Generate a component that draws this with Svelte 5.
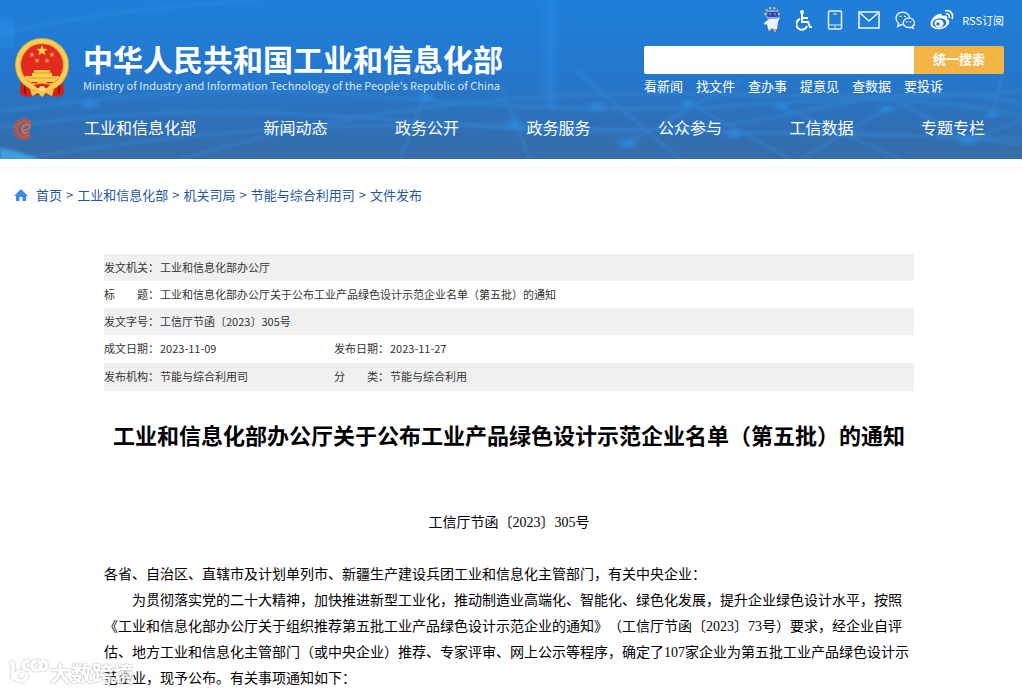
<script>
	const nav = ['工业和信息化部', '新闻动态', '政务公开', '政务服务', '公众参与', '工信数据', '专题专栏'];
	const quickLinks = ['看新闻', '找文件', '查办事', '提意见', '查数据', '要投诉'];
	const crumbs = ['首页', '工业和信息化部', '机关司局', '节能与综合利用司', '文件发布'];

	const info = [
		[['发文机关：', '工业和信息化部办公厅']],
		[['标　　题：', '工业和信息化部办公厅关于公布工业产品绿色设计示范企业名单（第五批）的通知']],
		[['发文字号：', '工信厅节函〔2023〕305号']],
		[['成文日期：', '2023-11-09'], ['发布日期：', '2023-11-27']],
		[['发布机构：', '节能与综合利用司'], ['分　　类：', '节能与综合利用']]
	];

	// glowing nodes of the header backdrop: x, y, radius
	const nodes = [
		[597, 107, 12],
		[628, 143, 14],
		[688, 103, 10],
		[734, 134, 12],
		[782, 107, 10],
		[887, 109, 10],
		[968, 140, 14],
		[992, 115, 10],
		[425, 97, 12],
		[515, 124, 14],
		[90, 104, 12]
	];

	// outer teeth of the small gear logo
	const teeth = [60, 82, 104, 126, 148, 170, 192, 214, 236, 258, 280, 302];

	let keyword = $state('');
</script>

<header>
	<svg class="backdrop" viewBox="0 0 1022 159" preserveAspectRatio="none" aria-hidden="true">
		<defs>
			<radialGradient id="glow">
				<stop offset="0" stop-color="#2b95ec" stop-opacity=".65" />
				<stop offset="1" stop-color="#2b90e6" stop-opacity="0" />
			</radialGradient>
			<linearGradient id="beam">
				<stop offset="0" stop-color="#2b93f0" stop-opacity="0" />
				<stop offset=".5" stop-color="#2b93f0" stop-opacity=".35" />
				<stop offset="1" stop-color="#2b93f0" stop-opacity="0" />
			</linearGradient>
			<filter id="soft"><feGaussianBlur stdDeviation="1.500" /></filter>
		</defs>
		<g fill="none" stroke="#3494e4" stroke-width="3" opacity=".35" filter="url(#soft)">
			<path d="M0 112 Q200 80 400 98 T760 104 T1022 116" />
			<path d="M0 128 Q180 100 420 122 T800 112 T1022 104" />
			<path d="M20 159 Q260 118 520 126 T1022 138" />
			<path d="M180 159 Q420 88 700 94 T1022 90" />
			<path d="M734 134 Q860 128 1022 144" />
			<path d="M425 97 L400 159 M500 85 L530 159 M575 70 L680 159 M688 103 L790 159" />
			<path d="M860 80 L968 140 L1022 120 M782 107 L900 159 M0 34 Q100 10 260 0" />
			<path d="M628 143 L740 80 M887 109 L800 159 M992 115 L1004 70" />
		</g>
		<rect x="540" y="0" width="20" height="110" fill="url(#beam)" />
		<rect x="0" y="18" width="14" height="30" fill="#2e94ee" opacity=".35" filter="url(#soft)" />
		<path d="M0 148 Q24 152 44 162 L0 162Z" fill="#42b4f8" opacity=".7" filter="url(#soft)" />
		{#each nodes as [x, y, r]}
			<ellipse cx={x} cy={y} rx={r} ry={r * 0.6} fill="url(#glow)" />
		{/each}
	</svg>

	<div class="top">
		<a class="brand" href="#home">
			<svg class="emblem" viewBox="0 0 56 60" aria-hidden="true">
				<path d="M7 41 L6 56 Q14 61 20 57 L36 57 Q44 61 50 56 L49 41Z" fill="#d51f1c" />
				<path d="M11 45v11M45 45v11" stroke="#8f1414" stroke-width="2" />
				<circle cx="28" cy="27" r="27" fill="#e4ad37" />
				<circle cx="28" cy="27" r="24" fill="none" stroke="#f6cd58" stroke-width="4" />
				<circle cx="28" cy="27" r="21" fill="#e32a20" />
				<path d="M28 7l1.500 3.700 4 .2-3.100 2.500 1.100 3.900-3.500-2.200-3.500 2.200 1.100-3.900-3.100-2.500 4-.2z" fill="#fbcf4a" />
				<g fill="#f3a640">
					<path id="small-star" d="M18 14l.8 1.700 1.900.1-1.500 1.200.5 1.900-1.700-1-1.700 1 .5-1.900-1.500-1.200 1.900-.1z" />
					<use href="#small-star" x="20" />
					<use href="#small-star" x="5" y="6" />
					<use href="#small-star" x="15" y="6" />
				</g>
				<path d="M20 32h16v3h2v3h7v2l-5 4H16l-5-4v-2h7v-3h2z" fill="#fccf4c" />
				<path d="M19 35h18M14 40h28" stroke="#e29828" />
				<path d="M15 44 Q22 47 24 44 Q28 41 32 44 Q34 47 41 44 L36 49 Q28 46 20 49Z" fill="#f8c545" />
				<path d="M20 47Q28 44 36 47L33 50H23Z" fill="#d9251f" />
				<path d="M16 51 Q23 55 28 50 Q33 55 40 51 L38 58 L32 55 L28 59 L24 55 L18 58Z" fill="#f7c84c" />
				<circle cx="28" cy="51" r="3" fill="#ffe07a" />
			</svg>
			<span class="names">
				<span class="name-cn">中华人民共和国工业和信息化部</span>
				<span class="name-en">Ministry of Industry and Information Technology of the People's Republic of China</span>
			</span>
		</a>

		<div class="tools">
			<div class="icons">
				<a href="#robot" aria-label="智能问答">
					<svg width="18" height="26" viewBox="0 0 18 26">
						<path d="M2 8Q3 1 9 1t7 7" fill="none" stroke="#d9cf55" stroke-width="2" stroke-dasharray="2 2" />
						<rect x="3" y="3" width="12" height="10" rx="5" fill="#8da9ed" />
						<rect x="4" y="5" width="11" height="5" rx="2" fill="#3341a8" />
						<path d="M6 7h2M11 7h2" stroke="#7fd4ff" />
						<path d="M6 12h7l4-2-2 5-1 7-3 2-1-3-3 2-2-1-1-5-2 1-1-2z" fill="#eef1fb" />
						<path d="M6 22v2M12 22v3" stroke="#e6a23c" stroke-width="2" />
					</svg>
				</a>
				<a href="#accessibility" aria-label="无障碍">
					<svg width="16" height="22" viewBox="0 0 16 22" fill="none" stroke="#fff" stroke-width="2">
						<circle cx="6" cy="3" r="2" fill="#fff" stroke="none" />
						<path d="M6 5v8h6l2 5h2M6 9h6M4 10a5.500 5.500 0 1 0 7 7" />
					</svg>
				</a>
				<a href="#mobile" aria-label="手机版">
					<svg width="16" height="20" viewBox="0 0 16 20" fill="none" stroke="#e6f3ff">
						<rect x="1.500" y="1" width="13" height="18" rx="1" stroke-width="1.500" />
						<path d="M6 4h4M2 15h12M7 17h2" />
					</svg>
				</a>
				<a href="#mail" aria-label="邮箱">
					<svg width="22" height="18" viewBox="0 0 22 18" fill="none" stroke="#e6f3ff" stroke-width="1.600">
						<rect x="1" y="1" width="20" height="16" />
						<path d="M2 2l9 8 9-8" />
					</svg>
				</a>
				<a href="#wechat" aria-label="微信">
					<svg width="20" height="20" viewBox="0 0 22 20" fill="none" stroke="#e6f3ff" stroke-width="1.500">
						<path d="M10 15l-3 0-4 2 1-3C-1 9 1 2 8 1.500c5-.2 8 3 8 6" />
						<path d="M15 8c7 0 8 7 4 9l1 2-3-1c-5 1-8-2-8-5s3-5 6-5z" />
						<path d="M5 6h2M10 6h2M12 12h2M16 12h2" />
					</svg>
				</a>
				<a href="#weibo" aria-label="微博">
					<svg width="24" height="22" viewBox="0 0 24 22">
						<path d="M9 5c3-1 3 1 3 2 3-1 6-1 5 3 3 1 3 4 1 6-4 5-13 6-17 1C-1 13 4 6 9 5z" fill="#fff" />
						<ellipse cx="9.500" cy="14" rx="7" ry="4.800" fill="#2379ce" transform="rotate(-8 9.500 14)" />
						<ellipse cx="9" cy="14.500" rx="4.500" ry="4" fill="#fff" />
						<circle cx="8" cy="15" r="1.800" fill="#2379ce" />
						<path d="M15 2c5-2 9 3 7 8M16 5c3-1 4 2 3 4" fill="none" stroke="#fff" stroke-width="1.600" />
					</svg>
				</a>
				<a class="rss" href="#rss">RSS订阅</a>
			</div>
			<form class="search" onsubmit={(e) => e.preventDefault()}>
				<input type="text" aria-label="搜索" bind:value={keyword} />
				<button type="submit">统一搜索</button>
			</form>
			<div class="quick">
				{#each quickLinks as link}
					<a href="#quick">{link}</a>
				{/each}
			</div>
		</div>
	</div>

	<nav>
		<a class="party" href="#party" aria-label="工业和信息化部">
			<svg width="26" height="24" viewBox="0 0 26 24" fill="none">
				{#each teeth as angle}
					<rect x="20" y="11" width="3" height="2" fill="#d8522e" transform="rotate({angle} 12 12)" />
				{/each}
				<path d="M18 18Q10 22 6 16Q3 9 9 5Q14 3 18 6" stroke="#d9502c" stroke-width="2.500" />
				<path d="M10 13Q16 14 18 10Q18 7 13 8Q9 10 10 14Q12 18 17 15" stroke="#e8663a" stroke-width="2" />
				<path d="M17 14Q24 12 24 7" stroke="#1679c4" stroke-width="2.500" />
			</svg>
		</a>
		<div class="menu">
			{#each nav as item}
				<a href="#nav">{item}</a>
			{/each}
		</div>
	</nav>
</header>

<main>
	<div class="crumbs">
		<svg width="14" height="12" viewBox="0 0 14 12" aria-hidden="true">
			<path d="M7 0l7 7h-2v5H8.500V8h-3v4H2V7H0z" fill="#3b8ae8" />
		</svg>
		{#each crumbs as crumb, i}
			{#if i > 0}<span>&gt;</span>{/if}
			<a href="#crumb">{crumb}</a>
		{/each}
	</div>

	<article>
		<table>
			<colgroup>
				<col class="label-col" />
				<col class="value-col" />
				<col class="label-col" />
				<col />
			</colgroup>
			<tbody>
				{#each info as row}
					<tr class:split={row.length > 1}>
						{#each row as [label, value]}
							<th scope="row">{label}</th>
							<td colspan={row.length > 1 ? 1 : 3}>{value}</td>
						{/each}
					</tr>
				{/each}
			</tbody>
		</table>

		<h1>工业和信息化部办公厅关于公布工业产品绿色设计示范企业名单（第五批）的通知</h1>

		<div class="content">
			<p class="number">工信厅节函〔2023〕305号</p>
			<p>各省、自治区、直辖市及计划单列市、新疆生产建设兵团工业和信息化主管部门，有关中央企业：</p>
			<p class="indent">为贯彻落实党的二十大精神，加快推进新型工业化，推动制造业高端化、智能化、绿色化发展，提升企业绿色设计水平，按照《工业和信息化部办公厅关于组织推荐第五批工业产品绿色设计示范企业的通知》（工信厅节函〔2023〕73号）要求，经企业自评估、地方工业和信息化主管部门（或中央企业）推荐、专家评审、网上公示等程序，确定了107家企业为第五批工业产品绿色设计示范企业，现予公布。有关事项通知如下：</p>
		</div>
	</article>
</main>

<div class="watermark">
	<svg width="40" height="28" viewBox="0 0 40 28" fill="none" aria-hidden="true">
		<g id="mark">
			<path d="M2 5h3v18M12 12l-5 5q1 6 6 6 5 0 6-6" />
			<path d="M21 4a4 4 0 1 0 0 7M28 3a4.500 4.500 0 1 0 1 0M33 4a4 4 0 1 1 0 7" />
		</g>
		<use href="#mark" class="mark-fill" />
	</svg>
	<span>大数跨境</span>
</div>

<style>
	:global(body) {
		background: #fff;
		font-family: 'Noto Sans CJK SC', sans-serif;
		text-spacing-trim: space-all;
	}

	:global(html) {
		overflow: hidden;
	}

	a {
		color: inherit;
		text-decoration: none;
	}

	svg {
		display: block;
	}

	header {
		position: relative;
		color: #fff;
		background: linear-gradient(#1f7fda, #2478cd 45%, #306fb5 80%, #386ca7);
	}

	.backdrop {
		position: absolute;
		inset: 0;
		width: 100%;
		height: 100%;
	}

	.top {
		position: relative;
		display: flex;
		justify-content: space-between;
		padding: 6px 18px 0 14px;
	}

	.brand {
		display: flex;
		gap: 13px;
		padding-top: 32px;
	}

	.emblem {
		width: 56px;
		height: 60px;
	}

	.names {
		display: flex;
		flex-direction: column;
		white-space: nowrap;
	}

	.name-cn {
		font-size: 30px;
		font-weight: bold;
		line-height: 40px;
	}

	.name-en {
		font-size: 11px;
		line-height: 14px;
		color: #d6e8fa;
	}

	.tools {
		width: 360px;
	}

	.icons {
		display: flex;
		align-items: center;
		justify-content: flex-end;
		gap: 15px;
		height: 28px;
	}

	.icons .rss {
		margin-left: -7px;
		font-size: 11px;
		line-height: 16px;
	}

	.search {
		display: flex;
		height: 28px;
		margin-top: 12px;
	}

	.search input {
		flex: 1;
		min-width: 0;
		padding: 0 8px;
		border: 0;
		border-radius: 2px 0 0 2px;
		background: #fff;
		font: inherit;
		font-size: 13px;
		outline: none;
	}

	.search button {
		width: 90px;
		padding: 0 0 4px;
		border: 0;
		border-radius: 0 2px 2px 0;
		background: #f1b445;
		color: #fff;
		font: inherit;
		font-size: 13px;
		font-weight: bold;
	}

	.quick {
		display: flex;
		gap: 13px;
		font-size: 13px;
		line-height: 24px;
	}

	nav {
		position: relative;
		display: flex;
		align-items: center;
		height: 61px;
		padding: 0 37px 0 12px;
	}

	.party {
		margin-right: 46px;
	}

	.menu {
		display: flex;
		flex: 1;
		justify-content: space-between;
		padding-bottom: 4px;
		font-size: 16px;
		line-height: 24px;
	}

	main {
		margin-top: 7px;
		padding: 18px 0 16px;
		background: linear-gradient(#f3f5f8, #fff 5px);
	}

	.crumbs {
		display: flex;
		align-items: center;
		gap: 4px;
		margin-left: 14px;
		font-size: 13px;
		line-height: 22px;
		color: #1f57a0;
	}

	.crumbs svg {
		margin-right: 4px;
	}

	article {
		margin: 48px 108px 0 104px;
	}

	table {
		width: 100%;
		table-layout: fixed;
		border-collapse: collapse;
		font-size: 11px;
		line-height: 16px;
		color: #333;
	}

	.label-col {
		width: 56px;
	}

	.value-col {
		width: 174px;
	}

	tr {
		height: 27px;
	}

	tr.split {
		height: 28px;
	}

	tr:nth-child(odd) {
		background: #f0f0f0;
	}

	th,
	td {
		padding: 0 0 2px;
		font-weight: normal;
		text-align: left;
		white-space: nowrap;
	}

	h1 {
		margin: 27px -10px 0;
		font-size: 22px;
		line-height: 32px;
		text-align: center;
		color: #000;
	}

	.content {
		margin-top: 60px;
		font-family: 'Liberation Serif', 'Noto Sans CJK SC', sans-serif;
		font-size: 14px;
		line-height: 26px;
		color: #000;
	}

	p {
		margin: 0;
	}

	.number {
		margin-bottom: 26px;
		text-align: center;
	}

	.indent {
		text-indent: 2em;
	}

	.watermark {
		position: fixed;
		left: 8px;
		bottom: 4px;
		display: flex;
		align-items: center;
		gap: 2px;
		color: #fff;
		font-size: 21px;
		font-weight: bold;
		line-height: 28px;
		text-shadow: 0 0 2px #999, 0 0 2px #bbb;
		opacity: 0.75;
	}

	.watermark svg {
		stroke: #fff;
		stroke-width: 3;
		filter: drop-shadow(0 0 1px #999);
	}
</style>
